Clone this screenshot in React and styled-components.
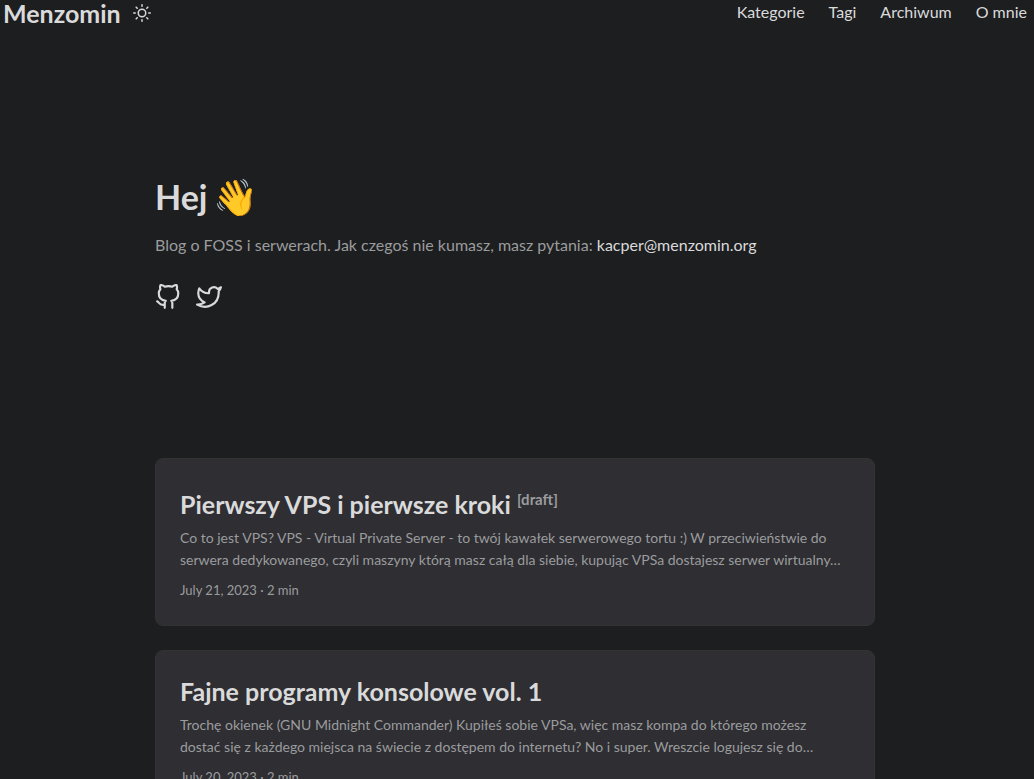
import React from "react";
import styled, { createGlobalStyle } from "styled-components";

const GlobalStyle = createGlobalStyle`
  * { box-sizing: border-box; }
  body {
    margin: 0;
    padding-right: 4px;
    background: #1d1e20;
    color: #dadadb;
    font: 16px/24px Lato, "Noto Sans", sans-serif;
  }
  a { color: inherit; text-decoration: none; }
  h1, h2, p { margin: 0; }
`;

const Header = styled.header`
  display: flex;
  justify-content: space-between;
  padding: 0 3px;
`;

const Brand = styled.div`
  display: flex;
  align-items: center;
  gap: 12px;
  line-height: 26px;
`;

const Logo = styled.a`
  font-size: 25px;
  font-weight: 700;
`;

const ThemeButton = styled.button`
  display: flex;
  padding: 0;
  border: 0;
  background: none;
  color: inherit;
`;

const Menu = styled.nav`
  display: flex;
  gap: 24px;
`;

const Main = styled.main`
  max-width: 720px;
  margin: 0 auto;
`;

const Intro = styled.section`
  display: flex;
  flex-direction: column;
  justify-content: center;
  min-height: 320px;
  margin: 56px 0;
`;

const Greeting = styled.h1`
  font-size: 34px;
  font-weight: 700;
  line-height: 44px;
`;

const Wave = styled.span`
  margin-left: -3px;
  font-size: 36px;
  line-height: 0;
`;

const Lead = styled.p`
  margin: 14px 0 27px;
  color: #9b9c9d;
`;

const Mail = styled.a`
  color: #dadadb;
`;

const Socials = styled.div`
  display: flex;
  gap: 15px;
`;

const SocialLink = styled.a`
  display: flex;
`;

const Icon = styled.svg`
  width: ${(p) => p.$size}px;
  height: ${(p) => p.$size}px;
  fill: none;
  stroke: currentColor;
  stroke-width: 2;
  stroke-linecap: round;
  stroke-linejoin: round;
`;

const Card = styled.article`
  margin-bottom: 24px;
  padding: 24px;
  border: 1px solid #333333;
  border-radius: 8px;
  background: #2e2e33;
`;

const CardTitle = styled.h2`
  padding-top: ${(p) => (p.$draft ? 5 : 0)}px;
  font-size: 25px;
  font-weight: 700;
  line-height: 32px;
`;

const Draft = styled.sup`
  color: #9b9c9d;
  font-size: 15px;
  line-height: 0;
  vertical-align: 9px;
`;

const Summary = styled.p`
  display: -webkit-box;
  -webkit-box-orient: vertical;
  -webkit-line-clamp: 2;
  overflow: hidden;
  margin: 7px 0 9px;
  color: #9b9c9d;
  font-size: 14px;
  line-height: 22px;
`;

const Meta = styled.footer`
  color: #9b9c9d;
  font-size: 13px;
  line-height: 21px;
`;

const posts = [
  {
    title: "Pierwszy VPS i pierwsze kroki",
    draft: true,
    summary:
      "Co to jest VPS? VPS - Virtual Private Server - to twój kawałek serwerowego tortu :) W przeciwieństwie do serwera dedykowanego, czyli maszyny którą masz całą dla siebie, kupując VPSa dostajesz serwer wirtualny…",
    meta: "July 21, 2023 · 2 min",
  },
  {
    title: "Fajne programy konsolowe vol. 1",
    summary:
      "Trochę okienek (GNU Midnight Commander) Kupiłeś sobie VPSa, więc masz kompa do którego możesz dostać się z każdego miejsca na świecie z dostępem do internetu? No i super. Wreszcie logujesz się do…",
    meta: "July 20, 2023 · 2 min",
  },
];

export default function App() {
  return (
    <>
      <GlobalStyle />
      <Header>
        <Brand>
          <Logo href="#">Menzomin</Logo>
          <ThemeButton aria-label="Toggle theme">
            <Icon $size={18} viewBox="0 0 24 24">
              <circle cx="12" cy="12" r="5" />
              <path d="M12 1v2M12 21v2M4.22 4.22l1.42 1.42M18.36 18.36l1.42 1.42M1 12h2M21 12h2M4.22 19.78l1.42-1.42M18.36 5.64l1.42-1.42" />
            </Icon>
          </ThemeButton>
        </Brand>
        <Menu>
          {["Kategorie", "Tagi", "Archiwum", "O mnie"].map((item) => (
            <a href="#" key={item}>{item}</a>
          ))}
        </Menu>
      </Header>
      <Main>
        <Intro>
          <Greeting>Hej <Wave>👋</Wave></Greeting>
          <Lead>
            Blog o FOSS i serwerach. Jak czegoś nie kumasz, masz pytania:{" "}
            <Mail href="mailto:kacper@menzomin.org">kacper@menzomin.org</Mail>
          </Lead>
          <Socials>
            <SocialLink href="#" aria-label="GitHub">
              <Icon $size={26} viewBox="0 0 24 24">
                <path d="M9 19c-5 1.5-5-2.5-7-3m14 6v-3.87a3.37 3.37 0 0 0-.94-2.61c3.14-.35 6.44-1.54 6.44-7A5.44 5.44 0 0 0 20 4.77 5.07 5.07 0 0 0 19.91 1S18.73.65 16 2.48a13.38 13.38 0 0 0-7 0C6.27.65 5.09 1 5.09 1A5.07 5.07 0 0 0 5 4.77a5.44 5.44 0 0 0-1.5 3.78c0 5.42 3.3 6.61 6.44 7A3.37 3.37 0 0 0 9 18.13V22" />
              </Icon>
            </SocialLink>
            <SocialLink href="#" aria-label="Twitter">
              <Icon $size={26} viewBox="0 0 24 24">
                <path d="M23 3a10.9 10.9 0 0 1-3.14 1.53 4.48 4.48 0 0 0-7.86 3v1A10.66 10.66 0 0 1 3 4s-4 9 5 13a11.64 11.64 0 0 1-7 2c9 5 20 0 20-11.5a4.5 4.5 0 0 0-.08-.83A7.72 7.72 0 0 0 23 3z" />
              </Icon>
            </SocialLink>
          </Socials>
        </Intro>
        {posts.map((post) => (
          <Card key={post.title}>
            <CardTitle $draft={post.draft}>
              {post.title} {post.draft && <Draft>[draft]</Draft>}
            </CardTitle>
            <Summary>{post.summary}</Summary>
            <Meta>{post.meta}</Meta>
          </Card>
        ))}
      </Main>
    </>
  );
}
